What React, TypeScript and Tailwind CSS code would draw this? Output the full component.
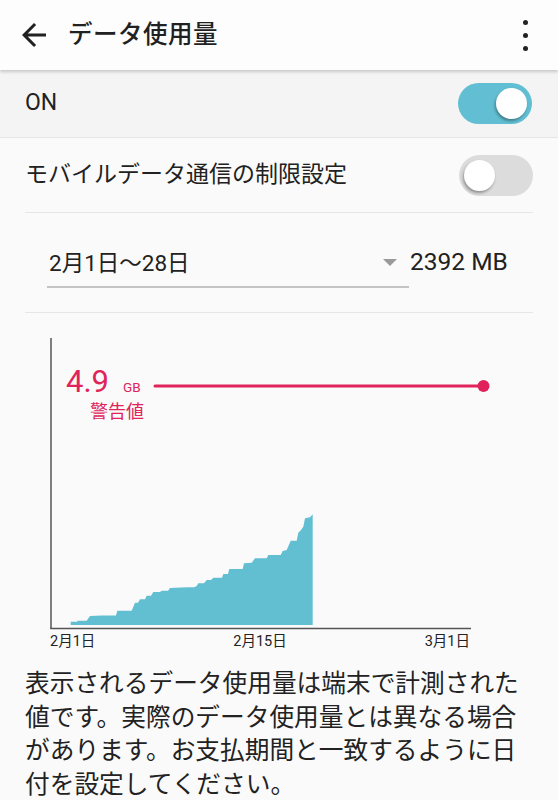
import React from "react";

const font = { fontFamily: 'Roboto, "Noto Sans CJK JP", sans-serif' };

const areaPath =
  "M70.7 625 L70.7 621.7 L77.3 621.7 L77.3 620.7 L86.7 620.7 L90 616 L101.7 615.5 L116 615.5 L117.3 610.7 L131.7 610.7 L135 602.7 L138 602.7 L140 599.3 L145 599.3 L146.7 595.7 L151 595.7 L153.3 592 L160 592 L161.7 590.7 L168 590.7 L170 588 L186.7 587.3 L194 587.3 L196.7 586 L198.3 583.3 L204 583.3 L206.7 580 L211 580 L213.3 577.7 L222 577.7 L223.3 574 L228 574 L229.3 569 L242.7 569 L244 563.3 L251.7 562.7 L255 558.3 L266.7 558.3 L268.3 555 L280.7 555 L282.7 551 L286.7 550 L290.7 540.7 L296.7 540.7 L298.3 532.7 L301 530 L303.3 526.7 L305 518.3 L310 517.3 L312.7 514.3 L312.7 625 Z";

function Toggle({ on }: { on: boolean }) {
  return (
    <div
      className={
        on
          ? "w-[74px] h-[41px] rounded-full bg-[#62bfd3] flex items-center justify-end px-[5px]"
          : "w-[74px] h-[41px] rounded-full bg-[#dcdcdc] flex items-center justify-start px-[5px]"
      }
    >
      <div className="w-[31px] h-[31px] rounded-full bg-white shadow-[-1px_2px_3px_rgba(0,0,0,0.35)]" />
    </div>
  );
}

export default function App() {
  return (
    <div className="w-[558px] h-[800px] overflow-hidden bg-[#fafafa] text-[#212121]" style={font}>
      {/* ヘッダー */}
      <div className="relative z-10 h-[70px] bg-[#fdfdfd] flex items-center shadow-[0_2px_3px_rgba(0,0,0,0.18)]">
        <svg width="36" height="36" viewBox="0 0 24 24" className="ml-[16px]">
          <path
            d="M20 11H7.83l5.59-5.59L12 4l-8 8 8 8 1.41-1.41L7.83 13H20v-2z"
            fill="#212121"
          />
        </svg>
        <span className="ml-[16px] text-[24.5px] font-medium tracking-[0.5px]">データ使用量</span>
        <div className="ml-auto mr-[30px] flex flex-col gap-[8px]">
          <span className="block w-[5px] h-[5px] rounded-full bg-[#222]" />
          <span className="block w-[5px] h-[5px] rounded-full bg-[#222]" />
          <span className="block w-[5px] h-[5px] rounded-full bg-[#222]" />
        </div>
      </div>

      {/* ON */}
      <div className="h-[68px] bg-[#f4f4f4] flex items-center justify-between pl-[25px] pr-[26px] border-b border-[#e6e6e6]">
        <span className="text-[23px]">ON</span>
        <Toggle on />
      </div>

      {/* 制限設定 */}
      <div className="mx-[25px] h-[75px] flex items-center justify-between border-b border-[#e6e6e6]">
        <span className="text-[23px]">モバイルデータ通信の制限設定</span>
        <Toggle on={false} />
      </div>

      {/* 期間 */}
      <div className="mx-[25px] h-[100px] flex items-center border-b border-[#e6e6e6]">
        <div className="ml-[22px] w-[362px] h-[46px] flex items-center justify-between border-b-2 border-[#c4c4c4] mt-[4px]">
          <span className="text-[22.5px] pl-[2px]">2月1日〜28日</span>
          <span className="mr-[12px] mt-[-2px] w-0 h-0 border-l-[7px] border-r-[7px] border-t-[7px] border-l-transparent border-r-transparent border-t-[#9a9a9a]" />
        </div>
        <span className="ml-[1px] text-[24.5px]">2392 MB</span>
      </div>

      {/* グラフ */}
      <div className="relative h-[321px]">
        <svg width="558" height="321" viewBox="0 313 558 321" className="block">
          <path d={areaPath} fill="#62bfd2" />
          <line x1="51" y1="338" x2="51" y2="629" stroke="#555" strokeWidth="1.5" />
          <line x1="50.3" y1="628.5" x2="471" y2="628.5" stroke="#555" strokeWidth="1.5" />
          <line x1="155" y1="386" x2="484" y2="386" stroke="#e0245b" strokeWidth="3" strokeLinecap="round" />
          <circle cx="483.5" cy="386" r="6" fill="#e0245b" />
        </svg>
        <div className="absolute left-[66px] top-[51px] flex items-end text-[#e0245b]">
          <span className="text-[31px] leading-[36px]">4.9</span>
          <span className="ml-[14px] mb-[5px] text-[13.5px] leading-[15px]">GB</span>
        </div>
        <span className="absolute left-[90px] top-[88px] text-[18px] leading-[22px] text-[#e0245b]">警告値</span>
      </div>
      <div className="ml-[50px] w-[420px] flex justify-between text-[14.5px] leading-[18px] text-[#222] mt-[-1px]">
        <span>2月1日</span>
        <span>2月15日</span>
        <span>3月1日</span>
      </div>

      {/* 説明 */}
      <p className="mt-[16px] pl-[25px] w-[535px] text-[24.7px] leading-[33.5px] text-[#222]">
        表示されるデータ使用量は端末で計測された値です。実際のデータ使用量とは異なる場合があります。お支払期間と一致するように日付を設定してください。
      </p>
    </div>
  );
}
